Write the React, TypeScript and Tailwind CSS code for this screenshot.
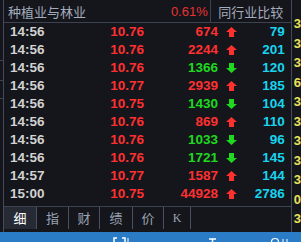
import React from 'react';

const ROWS = [
    { time: '14:56', price: '10.76', vol: '674', up: true, cnt: '79' },
    { time: '14:56', price: '10.76', vol: '2244', up: true, cnt: '201' },
    { time: '14:56', price: '10.76', vol: '1366', up: false, cnt: '120' },
    { time: '14:56', price: '10.77', vol: '2939', up: true, cnt: '185' },
    { time: '14:56', price: '10.75', vol: '1430', up: false, cnt: '104' },
    { time: '14:56', price: '10.76', vol: '869', up: true, cnt: '110' },
    { time: '14:56', price: '10.76', vol: '1033', up: false, cnt: '96' },
    { time: '14:56', price: '10.76', vol: '1721', up: false, cnt: '145' },
    { time: '14:57', price: '10.77', vol: '1587', up: true, cnt: '144' },
    { time: '15:00', price: '10.75', vol: '44928', up: true, cnt: '2786' },
];

const TABS = [
    { label: '细', w: 'w-[33px]', active: true },
    { label: '指', w: 'w-[32px]' },
    { label: '财', w: 'w-[31px]' },
    { label: '绩', w: 'w-[33px]' },
    { label: '价', w: 'w-[31px]' },
    { label: 'K', w: 'w-[27px]', serif: true },
];

const SIDE = ['3', '3', '3', '6', '3', '3', '3', '3', '3', '0', '3'];

const Arrow = ({ up }: { up: boolean }) => (
    <svg width="11" height="10" viewBox="0 0 11 10" className="block">
        {up ? (
            <polygon points="5.5,0 11,5 8,5 8,10 3,10 3,5 0,5" fill="#ff3030" />
        ) : (
            <polygon points="3,0 8,0 8,5 11,5 5.5,10 0,5 3,5" fill="#1fd81f" />
        )}
    </svg>
);

const App = () => {
    const num = { fontFamily: '"Liberation Sans", Arial, sans-serif' };
    const cjk = { fontFamily: '"Noto Sans CJK SC", "Noto Sans", sans-serif' };

    return (
        <div className="w-[301px] h-[242px] bg-[#14161c] flex flex-col overflow-hidden">
            <div className="flex h-[232px]">
                {/* outer panel edge */}
                <div className="w-[3px] flex flex-col">
                    <div className="mt-[60px] h-[21px] border-y border-[#3c4250]" />
                    <div className="mt-[17px] border-t border-[#3c4250]" />
                </div>

                {/* main panel */}
                <div className="w-[292px] border-x border-[#444a58] flex flex-col">
                    <div className="h-[23px] flex items-center border-b border-[#3c4250]">
                        <div className="pl-[4px] text-[13px] text-[#a4acbc] leading-none" style={cjk}>
                            种植业与林业
                        </div>
                        <div className="flex-1 text-right pr-[2px] text-[13px] text-[#e83232] leading-none" style={num}>
                            0.61%
                        </div>
                        <div className="w-px self-stretch bg-[#3c4250]" />
                        <div className="w-[80px] text-center text-[13px] text-[#a4acbc] leading-none" style={cjk}>
                            同行业比较
                        </div>
                    </div>

                    <div className="flex flex-col">
                        {ROWS.map((r, i) => (
                            <div key={i} className="h-[18px] flex items-center text-[13.5px] font-bold leading-none" style={num}>
                                <div className="w-[46px] pl-[6px] text-[#d2d2d2]">{r.time}</div>
                                <div className="w-[94px] text-right text-[#ff3030]">{r.price}</div>
                                <div className={`w-[74px] text-right ${r.up ? 'text-[#ff3030]' : 'text-[#1fd81f]'}`}>{r.vol}</div>
                                <div className="ml-[8px] w-[11px]">
                                    <Arrow up={r.up} />
                                </div>
                                <div className="flex-1 text-right pr-[6px] text-[#18d4ee]">{r.cnt}</div>
                            </div>
                        ))}
                    </div>

                    <div className="mt-[3px] h-[23px] flex border-t border-[#3c4250]">
                        {TABS.map((t, i) => (
                            <div
                                key={i}
                                className={`${t.w} flex items-center justify-center border-r border-[#4a5062] ${t.active ? 'bg-[#262a34] text-white' : 'text-[#9ca4b4]'} ${t.serif ? 'text-[12px]' : 'text-[13px]'}`}
                                style={t.serif ? { fontFamily: '"Liberation Serif", serif' } : cjk}
                            >
                                {t.label}
                            </div>
                        ))}
                    </div>
                </div>

                {/* neighbouring panel */}
                <div className="flex-1 flex flex-col pl-[2px] pt-[17px] text-[13px] font-bold leading-none text-[#e8e05a]" style={num}>
                    {SIDE.map((s, i) => (
                        <div key={i} className="h-[21.5px]">{s}</div>
                    ))}
                </div>
            </div>

            <div className="mt-auto h-[10px] bg-[#2b7cc6] relative">
                <svg width="301" height="10" className="absolute inset-0">
                    <path d="M114 10 V6 H117 M122 6 H125 V10" stroke="#fff" strokeWidth="1.5" fill="none" />
                    <path d="M128 6 V10" stroke="#fff" strokeWidth="1" />
                    <path d="M209 7 H216 M212.5 7 V10" stroke="#fff" strokeWidth="1.5" />
                    <circle cx="275" cy="10" r="3.5" stroke="#fff" strokeWidth="1.2" fill="none" />
                    <path d="M283 7 V10 M287 7 V10" stroke="#fff" strokeWidth="1" />
                </svg>
            </div>
        </div>
    );
};

export default App;
